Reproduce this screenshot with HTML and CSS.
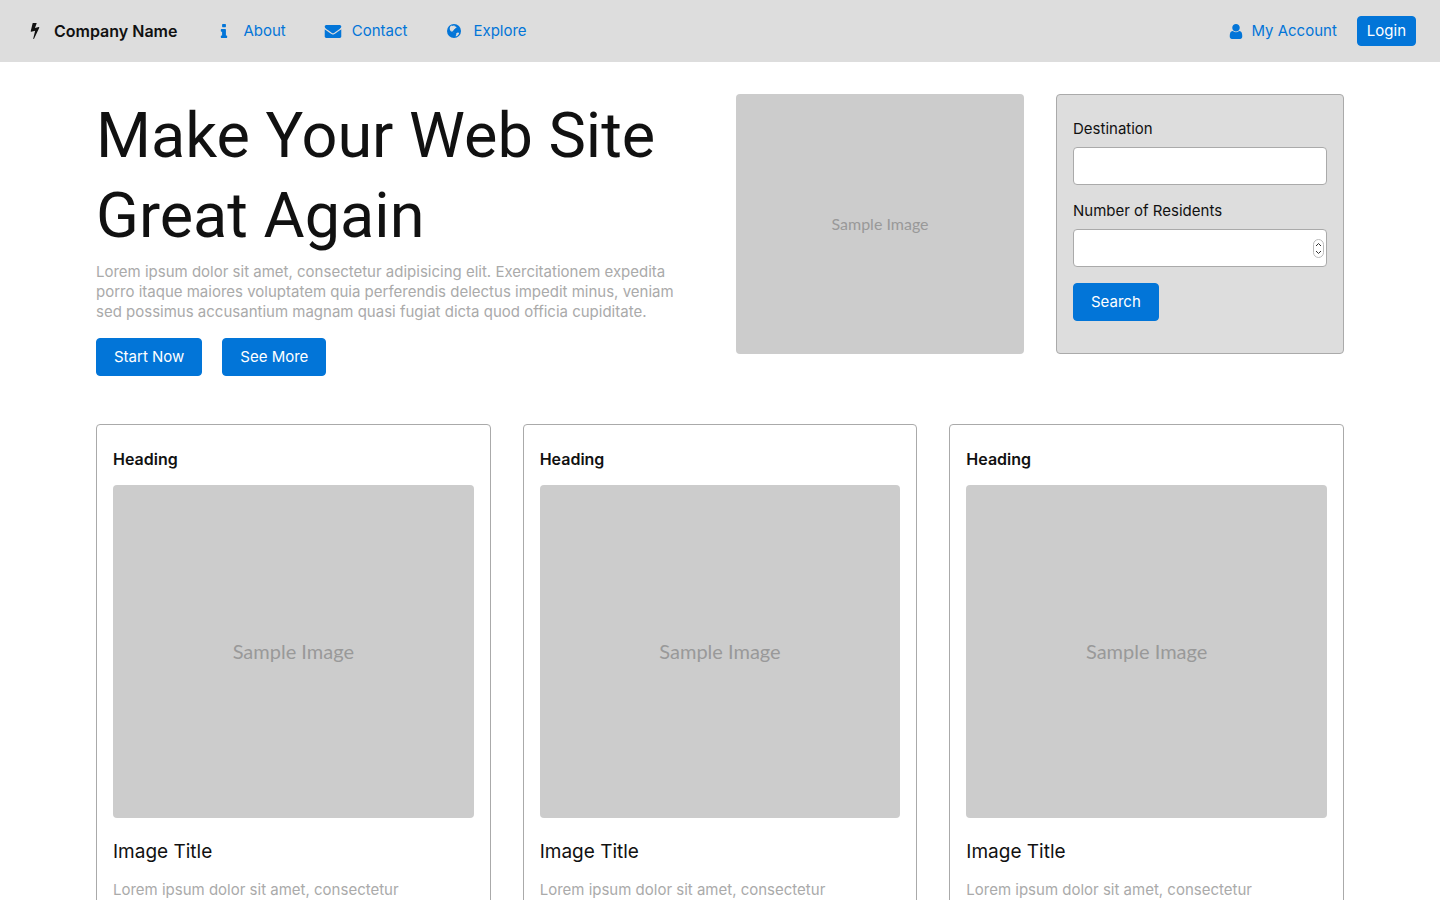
FILE: index.html
```html
<!DOCTYPE html>
<html lang="en">
<head>
<meta charset="utf-8">
<meta name="viewport" content="width=device-width, initial-scale=1">
<title>Company Name</title>
<link rel="stylesheet" href="styles.css">
</head>
<body>
<header class="topbar">
  <nav class="nav" aria-label="Main">
    <a class="nav-link brand" href="#"><svg class="icon icon-bolt" viewBox="0 0 896 1664" aria-hidden="true"><path d="M885 438q18 20 7 44l-540 1157q-13 25-42 25-4 0-14-2-17-5-25.500-19t-4.500-30l197-808-406 101q-4 1-12 1-18 0-31-11-18-15-13-39l201-825q4-14 16-23t28-9h328q19 0 32 12.500t13 29.500q0 8-5 18l-171 463 396-98q8-2 12-2 19 0 34 15z"/></svg>Company Name</a>
    <a class="nav-link" href="#"><svg class="icon icon-info" viewBox="0 0 640 1408" aria-hidden="true"><path d="M640 1216v128q0 26-19 45t-45 19h-512q-26 0-45-19t-19-45v-128q0-26 19-45t45-19h64v-384h-64q-26 0-45-19t-19-45v-128q0-26 19-45t45-19h384q26 0 45 19t19 45v576h64q26 0 45 19t19 45zM512 64v192q0 26-19 45t-45 19h-256q-26 0-45-19t-19-45v-192q0-26 19-45t45-19h256q26 0 45 19t19 45z"/></svg>About</a>
    <a class="nav-link" href="#"><svg class="icon icon-mail" viewBox="0 0 1792 1408" aria-hidden="true"><path d="M1792 454v794q0 66-47 113t-113 47h-1472q-66 0-113-47t-47-113v-794q44 49 101 87 362 246 497 345 57 42 92.500 65.500t94.500 48 110 24.500h2q51 0 110-24.500t94.500-48 92.500-65.500q170-123 498-345 57-39 100-87zM1792 160q0 79-49 151t-122 123q-376 261-468 325-10 7-42.500 30.500t-54 38-52 32.500-57.500 27-50 9h-2q-23 0-50-9t-57.500-27-52-32.500-54-38-42.500-30.500q-91-64-262-182.500t-205-142.500q-62-42-117-115.500t-55-136.500q0-78 41.500-130t118.500-52h1472q65 0 112.500 47t47.500 113z"/></svg>Contact</a>
    <a class="nav-link" href="#"><svg class="icon icon-globe" viewBox="0 0 14 14" aria-hidden="true"><circle class="globe-sea" cx="7" cy="7" r="7"/><path class="globe-land" d="M3.200 2.400 4.700 1.600 5.800 2 6.700 1.500 8 1.700 7.600 2.400 8.800 2.500 9.500 3.300 9.200 4.100 8.300 4 8.200 4.900 7.100 5.300 6.700 6.200 5.900 6.700 5.700 7.500 4.900 7.200 4.300 6.400 4.400 7.300 5.300 8 4.800 8 3.600 7.100 2.900 5.700 2.700 4.100zM9.300 9.300 10.800 8.600 11.800 8.800 12.100 9.600 11 11.200 9.500 12.300 8.500 12.300 9.200 11.100zM6.500 8.100 7.400 8.300 7 8.600z"/></svg>Explore</a>
  </nav>
  <div class="account">
    <a class="nav-link account-link" href="#"><svg class="icon icon-user" viewBox="256 128 1280 1536" aria-hidden="true"><path d="M1536 1399q0 109-62.500 187t-150.500 78h-854q-88 0-150.500-78t-62.500-187q0-85 8.500-160.500t31.500-152 58.500-131 94-89 134.500-34.500q131 128 313 128t313-128q76 0 134.500 34.500t94 89 58.500 131 31.500 152 8.500 160.500zM1280 512q0 159-112.500 271.500t-271.500 112.500-271.500-112.500-112.500-271.500 112.500-271.500 271.500-112.500 271.500 112.500 112.500 271.500z"/></svg>My Account</a>
    <button class="btn btn-small" type="button">Login</button>
  </div>
</header>
<main class="page">
  <section class="hero">
    <div class="intro">
      <h1 class="title">Make Your Web Site Great Again</h1>
      <p class="muted">Lorem ipsum dolor sit amet, consectetur adipisicing elit. Exercitationem expedita porro itaque maiores voluptatem quia perferendis delectus impedit minus, veniam sed possimus accusantium magnam quasi fugiat dicta quod officia cupiditate.</p>
      <div class="actions">
        <button class="btn" type="button">Start Now</button>
        <button class="btn" type="button">See More</button>
      </div>
    </div>
    <div class="sample sample-hero">Sample Image</div>
    <form class="search">
      <div class="field">
        <label for="destination">Destination</label>
        <input class="input" id="destination" type="text">
      </div>
      <div class="field">
        <label for="residents">Number of Residents</label>
        <div class="stepper">
          <input class="input" id="residents" type="number">
          <svg class="stepper-arrows" viewBox="0 0 11 19" aria-hidden="true"><rect x=".5" y=".5" width="10" height="18" rx="5"/><path d="M3 7l2.500-2.500L8 7M3 12l2.500 2.500L8 12"/></svg>
        </div>
      </div>
      <button class="btn" type="button">Search</button>
    </form>
  </section>
  <section class="cards">
    <article class="card">
      <h2 class="card-heading">Heading</h2>
      <div class="sample sample-card">Sample Image</div>
      <h3 class="card-title">Image Title</h3>
      <p class="muted">Lorem ipsum dolor sit amet, consectetur adipisicing elit.</p>
    </article>
    <article class="card">
      <h2 class="card-heading">Heading</h2>
      <div class="sample sample-card">Sample Image</div>
      <h3 class="card-title">Image Title</h3>
      <p class="muted">Lorem ipsum dolor sit amet, consectetur adipisicing elit.</p>
    </article>
    <article class="card">
      <h2 class="card-heading">Heading</h2>
      <div class="sample sample-card">Sample Image</div>
      <h3 class="card-title">Image Title</h3>
      <p class="muted">Lorem ipsum dolor sit amet, consectetur adipisicing elit.</p>
    </article>
  </section>
</main>
</body>
</html>
```

FILE: styles.css
```css
* { box-sizing: border-box; }
body {
  margin: 0;
  background: #fff;
  color: #111;
  font: 15px/20px Inter, "Liberation Sans", sans-serif;
}
h1, h2, h3, p { margin: 0; }
button, input { font: inherit; }

.topbar {
  display: flex;
  justify-content: space-between;
  align-items: center;
  min-height: 62px;
  padding: 16px 24px;
  background: #ddd;
}
.nav { display: flex; gap: 36px; }
.account { display: flex; align-items: center; gap: 20px; }
.nav-link {
  display: flex;
  align-items: center;
  gap: 8px;
  color: #0275d8;
  text-decoration: none;
}
.brand { color: #111; font-size: 16px; font-weight: 600; }
.icon { width: 22px; height: 14px; fill: currentColor; }
.icon-bolt { height: 16px; }
.icon-mail { height: 13px; }
.globe-land { fill: #ddd; }
.icon-user { width: 14px; height: 15px; }

.btn {
  padding: 8px 17px;
  border: 1px solid #0275d8;
  border-radius: 4px;
  background: #0275d8;
  color: #fff;
  cursor: pointer;
}
.btn-small { padding: 4px 9px; }

.page { padding: 32px 96px; }
.hero {
  display: grid;
  grid-template-columns: repeat(4, 1fr);
  align-items: start;
  gap: 32px;
  margin-bottom: 48px;
}
.intro { grid-column: span 2; padding: 2px 8px 0 0; }
.title {
  margin-bottom: 6px;
  font-family: Roboto, Inter, sans-serif;
  font-size: 63px;
  line-height: 80px;
  font-weight: 400;
}
.muted { color: #aaa; }
.actions { display: flex; gap: 20px; margin-top: 16px; }

.sample {
  display: flex;
  align-items: center;
  justify-content: center;
  border-radius: 4px;
  background: #ccc;
  color: #999;
  font-family: Lato, "Liberation Sans", sans-serif;
}
.sample-hero { aspect-ratio: 288 / 260; font-size: 16px; }
.sample-card { aspect-ratio: 361 / 333; font-size: 20px; }

.search {
  padding: 24px 16px 32px;
  border: 1px solid #aaa;
  border-radius: 4px;
  background: #ddd;
}
.field {
  display: flex;
  flex-direction: column;
  gap: 8px;
  margin-bottom: 16px;
}
.input {
  width: 100%;
  height: 38px;
  padding: 8px;
  border: 1px solid #aaa;
  border-radius: 4px;
  background: #fff;
  appearance: textfield;
}
.stepper { position: relative; }
.input::-webkit-inner-spin-button { appearance: none; margin: 0; }
.stepper-arrows {
  position: absolute;
  top: 10px;
  right: 3px;
  width: 11px;
  height: 19px;
  fill: #fff;
  stroke: #bbb;
  pointer-events: none;
}
.stepper-arrows path { fill: none; stroke: #333; }

.cards {
  display: grid;
  grid-template-columns: repeat(3, 1fr);
  gap: 32px;
}
.card {
  padding: 24px 16px;
  border: 1px solid #aaa;
  border-radius: 4px;
}
.card-heading {
  margin-bottom: 16px;
  font-size: 16px;
  line-height: 20px;
  font-weight: 600;
}
.card-title {
  margin: 22px 0 16px;
  font-size: 19px;
  line-height: 24px;
  font-weight: 400;
}
```
